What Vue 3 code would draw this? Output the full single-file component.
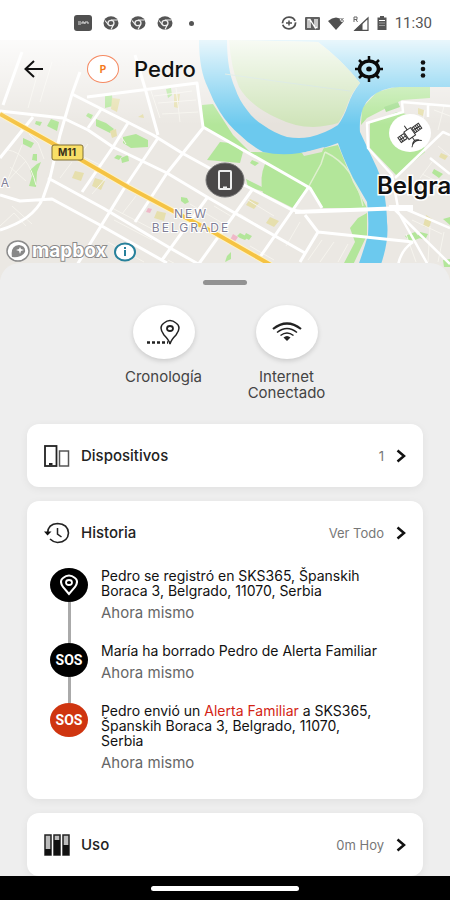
<template>
  <div class="phone">
    <header class="status-bar">
      <div class="status-left">
        <svg width="18" height="16" viewBox="0 0 18 16">
          <rect width="18" height="16" rx="3" fill="#505050" />
          <path d="M4 7h3M4 9h3M8 9V7h2v2M11 9V7h3v2" stroke="#ddd" fill="none" />
        </svg>
        <svg v-for="n in 3" :key="n" width="16" height="14" viewBox="0 0 16 14">
          <ellipse cx="8" cy="7" rx="7.5" ry="6.8" fill="#555" />
          <path d="M8 4h6.500M5.200 8.500 2 4.500M10.500 8.500 8 13.500" stroke="#eee" stroke-width="1.200" />
          <ellipse cx="8" cy="7" rx="3" ry="2.700" fill="#555" stroke="#eee" stroke-width="1.300" />
        </svg>
        <span class="status-dot"></span>
      </div>
      <div class="status-right">
        <svg width="16" height="14" viewBox="0 0 16 14" fill="none" stroke="#505050">
          <ellipse cx="8" cy="7" rx="6.500" ry="5.800" stroke-width="1.800" stroke-dasharray="17 1.500" />
          <path d="M8 4.500v5M5 7h6" stroke-width="1.500" />
        </svg>
        <svg width="15" height="13" viewBox="0 0 15 13">
          <rect width="15" height="13" rx="1" fill="#606060" />
          <path d="M3 11V2.500h2l5 8V2M12 2v8.500h-2M5 2.500V11" fill="none" stroke="#fff" stroke-width="1.300" />
        </svg>
        <svg width="17" height="13" viewBox="0 0 17 13">
          <path d="M0 4Q8-3 16 4L8 13z" fill="#505050" />
          <path d="m12.500 1 3 3m0-3-3 3" stroke="#fff" stroke-width="2.500" />
          <path d="m12.500 1 3 3m0-3-3 3" stroke="#666" />
        </svg>
        <svg width="16" height="15" viewBox="0 0 16 15">
          <path d="M2 14.300 15 2v12.300z" fill="none" stroke="#505050" stroke-width="1.200" />
          <path d="M2 14.300 9.500 7v7.300z" fill="#505050" />
          <path d="M1 6V1h3v2.500H1m2 0L4.500 6" fill="none" stroke="#666" />
        </svg>
        <svg width="10" height="14" viewBox="0 0 10 14">
          <path d="M3 0h4v1.500h2.500V14h-9V1.500H3z" fill="#555" />
          <path d="M2 4.500h6" stroke="#fff" />
          <path d="M2 7h6M2 9.500h6" stroke="#999" />
        </svg>
        <time>11:30</time>
      </div>
    </header>

    <section class="map">
      <svg class="map-canvas" viewBox="0 40 450 240" preserveAspectRatio="xMidYMin slice">
        <defs>
          <linearGradient id="fade" x1="0" y1="0" x2="0" y2="1">
            <stop offset="0" stop-color="#fff" stop-opacity=".85" />
            <stop offset="1" stop-color="#fff" stop-opacity="0" />
          </linearGradient>
        </defs>
        <rect y="40" width="450" height="240" fill="#ebe8e3" />

        <!-- parks -->
        <g fill="#b3e69a">
          <path d="m202 105 11-1 20 31 17 17 53 1 35-8 15 37 14 26h-45l-12-20-107-61z" />
          <path d="m220 142 10 1 13 9-3 11-33-3z" />
          <path d="m265 164 14 5 28 19-14 20-30-15q-4-15 2-29z" />
          <path d="m361 125 1-17 15-16 18-5h35v11l-28 2-35 18zM370 123l27-11 23 5 5 35-28 24-27-28z" />
          <path d="m358 218 9-5v22l-14 30h-10l12-23-5-14zM246 179l16 8 3 5-17-5zM252 160l7 3-4 3-5-3z" />
          <path d="m123 137 13-3 12 6v7l-17 1-8-5zM51 119l8 3-2 9-10-5zM36 121l6 1-2 4-5-2zM105 96l7-1 1 11-8 2zM96 119l10 4 8 6-4 4-14-7zM88 113l5 2-2 4-5-3zM166 89l5-1 1 7-4 3zM174 98h4v7h-3z" />
          <path d="m23 138 11 5-3 5-8-4zM33 154h4v7l-5-1zM30 170l7-6 4-2-4 10-1 15-7-1 3-10zM121 158l7-3 1 6-7 2zM117 155l5 1-3 4-5-2zM181 197l6 1 2 4-4 2-4-3zM227 256l4-4v7l-6 3zM237 236l3-3 8 4-3 3-5-2zM246 233l6 3-3 4-5-3z" />
          <path d="m405 236 10-4 5 6-10 4zM420 232l8 2-3 6-8-3zM434 169l9 5-4 4-7-5zM443 219l7-2v8zM443 260l7-1v8h-6z" />
        </g>
        <path d="m384 107 14-5 2 5-14 5z" fill="#a0dc8c" />
        <g fill="#e6dfad">
          <path d="m112 98 8 1-3 13-6-3zM174 94h6l-2 14-4-1zM75 171l9 2-3 8-9-3zM95 178l10 3-4 9-9-4zM157 211l9 2-2 8-10-3zM250 199l9 4-5 6-8-4zM270 217l9 4-5 6-8-4zM426 215l6 4-3 9-6-2zM441 153l7 3-3 4-6-3zM138 117l5-3 1 4zM418 108l6 2-1 6-5-2zM110 131l6-2 1 7-5 2z" />
        </g>
        <path d="m148 208 4 1-2 4-4-1zM233 234l5 3-4 6-4-3z" fill="#efb8c8" />

        <!-- minor streets -->
        <g fill="none" stroke="#f6f4ee" stroke-width="1">
          <path d="M8 150q20 3 28 35m-26-18 16 14m-20 2 20-22m-4-16-14 34M29 134l9 9 6 16M0 226l14-13 12 13m-14-20 20 18M38 72 28 108m24-46-12 40M150 88l10 30m-6-22 38-5m-34 12 38-3m-34 14 36-2M176 88l4 34M120 135l6 9m16-14-16-10M70 150l32 16m-24-8 10-14m38 42 30 16M60 178l12-16m20 32 14-16m16 36 14-18M112 208l42 22m-40-10 38 20m-44 2 36 20m40-46 32 18m-26-30 34 20m-56 36 34 18M214 206l20 12m14-18 26 16m-34-2 28 18m-18 14 24 14M300 222l-14 24m36-6-14 20m26-18-14 20m28-18-10 18M425 110l-3 16m22-20-6 24m-4-20 16 6m-12 30 12 10m-34 24 26 10m-20-16 24 12M432 162l-12 16m-8 42 30 14m-36 0 10 28m14-36-2 36m16-30-6 30" />
        </g>
        <path d="m325 152-4 12-12 22M325 152q30 14 38 54" fill="none" stroke="#dff0cf" stroke-width="1.500" />

        <!-- rivers -->
        <path d="M199 40q0 30 9 48 5 13 12 24 8 13 20 23 10 10 23 17 18 4 37 1 20-3 38-10 5 15 15 35l14 24q2 16 1 33-5 18-15 45h22q15-35 12-58 0-10-2-24-2-16-8-30-9-19-17-36-1-13 3-24 6-13 20-18 8-3 17-3h50V40z" fill="#6cc9ee" />
        <path d="M227 40q0 30 8 48 4 12 12 22 6 9 16 15 11 8 24 12 12 2 23 0 16-4 28-12 6-8 10-20 4-12 12-22-18-23-42-41z" fill="#e6e2dc" />
        <path d="M229 40q2 28 10 47 10 18 38 31 18 9 36 9 15-1 25-4 6-8 10-20 4-11 12-20-18-23-42-41z" fill="#cfe4b9" />
        <path d="M225 74q63 9 125 17" stroke="#c5ddd2" fill="none" />
        <path d="m302 153 22-6-2 5-18 4z" fill="#e6e2dc" />

        <!-- streets -->
        <g fill="none" stroke="#fff" stroke-width="3" stroke-linejoin="round">
          <path d="m0 111 63 7 25 12 25 17 54 26 40 24 40 23 58 33M72 94l81 41 29 18 31 17 37 18 42 22 13 2M87 97l110-14 6 44 107 61 12 20M135 55l10 33 13 47M80 72l-8 22-12 41-10 43-7 20q-10 22-43 32M0 195l20 6 32-2 48 26 67 38M48 178l55 30 67 40 30 17M203 128l-36 45-32 49M158 138l-33 49-48 78M128 123l-15 24-31 45M102 108l-14 20M33 117 0 158M22 52 3 105M207 198l-45 62M252 190l-54 75M308 188l-50 72M305 215l13 17 95 10M318 232l-18 30" />
          <path d="M450 106l-48-4 1 10-36 11 1 25 24 27 6 33M395 178l48-46 7 3M393 208l57 56M396 208l32 57M403 208l47 20M413 242q-12 8-15 23M430 158l20 16M428 105v12" stroke-width="2.500" />
        </g>
        <path d="M295 212l110-4" stroke="#fff" stroke-width="4" />
        <path d="M389 208h24" stroke="#fff" stroke-width="6" />

        <!-- M11 motorway -->
        <path d="m0 114 52 29 76 44 47 25 38 20 58 33" fill="none" stroke="#fff3c4" stroke-width="6" />
        <path d="m0 114 52 29 76 44 47 25 38 20 58 33" fill="none" stroke="#f5c344" stroke-width="4" />
        <rect x="52" y="145" width="31" height="15" rx="2" fill="#f8df67" stroke="#806e35" />
        <text class="map-road" x="67" y="156">M11</text>

        <text class="map-area" x="191" y="218">NEW</text>
        <text class="map-area" x="191" y="232">BELGRADE</text>
        <text class="map-area" x="6" y="187">A</text>
        <text class="map-city" x="377" y="194">Belgra</text>

        <!-- mapbox logo -->
        <g fill="none" stroke="#8b8b8b">
          <ellipse cx="18" cy="251" rx="11" ry="10" fill="#fff" stroke-width="1.500" />
          <path d="M12 257q-2-11 7-12 7 1 6 7-3 6-13 5" fill="#888" stroke="none" />
          <path d="m20 247 1 2 3 1-3 1-1 3-1-3-3-1 3-1z" fill="#fff" stroke="none" />
        </g>
        <text class="map-logo" x="32" y="257">mapbox</text>
        <ellipse cx="125" cy="252" rx="10" ry="8.500" fill="#fff" stroke="#27819b" stroke-width="2" />
        <path d="M125 250v6m0-9v2" stroke="#27819b" stroke-width="2" />

        <!-- satellite toggle -->
        <ellipse cx="410" cy="133" rx="21" ry="19" fill="#fff" />
        <g transform="rotate(-35 410 134)" fill="none" stroke="#333">
          <rect x="406" y="129" width="8" height="9" fill="#fff" />
          <path d="M398 130h7v6h-7zm17 0h8v6h-8zM400 130v6m2-6v6m15-6v6m2-6v6m2-6v6M398 133h7m10 0h8M410 129v-5m0 14v4m-4 2q4-4 8 0m-10 2q6-6 12 0" />
        </g>

        <!-- device marker -->
        <ellipse cx="225" cy="180" rx="19" ry="17" fill="#4b4949" stroke="#777" />
        <rect x="219" y="171" width="12" height="18" rx="1" fill="none" stroke="#eee" stroke-width="2" />
        <path d="M223 187.500h4" stroke="#eee" stroke-width="2" />
        <rect y="40" width="450" height="85" fill="url(#fade)" />
      </svg>

      <div class="toolbar">
        <button class="icon-button" aria-label="Volver">
          <svg width="20" height="18" viewBox="0 0 20 18" fill="none" stroke="#111" stroke-width="2">
            <path d="M19 9H2m8-8L1.500 9l8.500 8" />
          </svg>
        </button>
        <span class="avatar">P</span>
        <h1>Pedro</h1>
        <button class="icon-button" aria-label="Ajustes">
          <svg width="30" height="26" viewBox="0 0 30 26" fill="none" stroke="#0b0b0b">
            <path d="M15 0v5m0 16v5M1 13h5m18 0h5M5 4l4 4m12 10 4 4M5 22l4-4M21 8l4-4" stroke-width="2.500" />
            <ellipse cx="15" cy="13" rx="9.500" ry="8" stroke-width="3.500" />
            <ellipse cx="15" cy="13" rx="2.800" ry="2.500" fill="#0b0b0b" stroke="none" />
          </svg>
        </button>
        <button class="icon-button more" aria-label="Más opciones">
          <svg width="6" height="18" viewBox="0 0 6 18" fill="#111">
            <circle cx="3" cy="2.500" r="2.300" />
            <circle cx="3" cy="9" r="2.300" />
            <circle cx="3" cy="15.500" r="2.300" />
          </svg>
        </button>
      </div>
    </section>

    <main class="sheet">
      <div class="handle"></div>

      <div class="actions">
        <button class="action">
          <span class="action-circle">
            <svg width="36" height="28" viewBox="0 0 36 28" fill="none" stroke="#222">
              <path d="M24 26q-1-4-6-9-6-8 0-12 6-5 12 0 6 4 0 12-5 5-6 9z" stroke-width="1.500" />
              <ellipse cx="24" cy="10.500" rx="3" ry="2.500" stroke-width="1.800" />
              <path d="M1 24.500h21" stroke-width="2.500" stroke-dasharray="3 2" />
            </svg>
          </span>
          <span>Cronología</span>
        </button>
        <button class="action">
          <span class="action-circle">
            <svg width="30" height="20" viewBox="0 0 30 20" fill="none" stroke="#222">
              <path d="M1 7Q15-4 29 7" stroke-width="2.200" />
              <path d="M5 10.500q10-8 20 0M8.500 13.500q6.500-5 13 0" stroke-width="1.500" />
              <path d="M11.500 15.500q3.500-3 7 0L15 19z" fill="#222" stroke="none" />
            </svg>
          </span>
          <span>Internet<br />Conectado</span>
        </button>
      </div>

      <section class="card">
        <button class="card-row">
          <svg width="26" height="22" viewBox="0 0 26 22" fill="none" stroke="#222">
            <rect x="1" y="1" width="11.500" height="20" stroke-width="1.800" />
            <path d="M5 19h3.500" stroke-width="2" />
            <rect x="15.500" y="6" width="9" height="15" stroke="#555" stroke-width="1.500" />
          </svg>
          <span class="row-title">Dispositivos</span>
          <span class="row-value">1</span>
          <svg class="chevron" viewBox="0 0 10 14"><path d="m1.500 1.500 6.500 5.500-6.500 5.500" /></svg>
        </button>
      </section>

      <section class="card">
        <button class="card-row">
          <svg width="26" height="22" viewBox="0 0 26 22" fill="none" stroke="#222">
            <path d="M3.500 11Q4 2 13.500 1.500 24 2 24.500 11 24 20 13.500 20.500 9 20 6 17" stroke-width="1.600" />
            <path d="m0 9.500 3.500 4 4-4z" fill="#111" stroke="none" />
            <path d="M13.500 6v6l4 3" stroke-width="1.500" />
          </svg>
          <span class="row-title">Historia</span>
          <span class="row-value">Ver Todo</span>
          <svg class="chevron" viewBox="0 0 10 14"><path d="m1.500 1.500 6.500 5.500-6.500 5.500" /></svg>
        </button>

        <ul class="timeline">
          <li v-for="(event, index) in events" :key="index" class="event">
            <div class="event-rail">
              <span :class="['event-badge', event.type]">
                <svg v-if="event.type === 'place'" width="18" height="22" viewBox="0 0 18 22" fill="none" stroke="#fff">
                  <path d="M9 20 3 13Q-1 7 3 4q6-5 12 0 4 3 0 9z" stroke-width="2" />
                  <ellipse cx="9" cy="8.500" rx="3" ry="2.500" stroke-width="1.800" />
                </svg>
                <template v-else>SOS</template>
              </span>
            </div>
            <div class="event-body">
              <p>
                <template v-for="(part, i) in event.text" :key="i">
                  <em v-if="part.alert">{{ part.alert }}</em>
                  <template v-else>{{ part }}</template>
                </template>
              </p>
              <small>Ahora mismo</small>
            </div>
          </li>
        </ul>
      </section>

      <section class="card">
        <button class="card-row">
          <svg width="26" height="22" viewBox="0 0 26 22">
            <path d="M1 1h6v20H1zM10 1h6v20h-6zM19 1h6v20h-6z" fill="#bbb" stroke="#222" stroke-width="1.500" />
            <path d="M1 15h6v6H1zM10 6h6v15h-6zM19 11h6v10h-6z" fill="#111" />
          </svg>
          <span class="row-title">Uso</span>
          <span class="row-value">0m Hoy</span>
          <svg class="chevron" viewBox="0 0 10 14"><path d="m1.500 1.500 6.500 5.500-6.500 5.500" /></svg>
        </button>
      </section>
    </main>

    <footer class="nav-bar"><span></span></footer>
  </div>
</template>

<script setup>
const events = [
  {
    type: 'place',
    text: ['Pedro se registró en SKS365, Španskih Boraca 3, Belgrado, 11070, Serbia'],
  },
  {
    type: 'sos',
    text: ['María ha borrado Pedro de Alerta Familiar'],
  },
  {
    type: 'alert',
    text: ['Pedro envió un ', { alert: 'Alerta Familiar' }, ' a SKS365, Španskih Boraca 3, Belgrado, 11070, Serbia'],
  },
]
</script>

<style>
body {
  margin: 0;
  background: #eee;
}
</style>

<style scoped>
.phone {
  min-height: 100vh;
  display: flex;
  flex-direction: column;
  font-family: Inter, Roboto, sans-serif;
  color: #222;
}
button {
  border: 0;
  padding: 0;
  background: none;
  font: inherit;
  color: inherit;
  cursor: pointer;
}
.status-bar {
  height: 40px;
  padding: 6px 18px 0 74px;
  box-sizing: border-box;
  display: flex;
  align-items: center;
  justify-content: space-between;
  background: #fff;
}
.status-left,
.status-right {
  display: flex;
  align-items: center;
  gap: 11px;
}
.status-right {
  gap: 8px;
}
.status-dot {
  width: 5px;
  height: 5px;
  margin-left: 5px;
  border-radius: 50%;
  background: #555;
}
.status-bar time {
  font-family: Roboto, sans-serif;
  font-size: 15px;
  color: #555;
}
.map {
  position: relative;
  height: 240px;
}
.map-canvas {
  display: block;
  width: 100%;
  height: 100%;
}
.map-road {
  font-size: 10px;
  font-weight: 700;
  text-anchor: middle;
  fill: #3a321a;
}
.map-area {
  font-size: 12px;
  letter-spacing: 2px;
  text-anchor: middle;
  fill: #7f7e96;
  stroke: #fff;
  stroke-width: 2px;
  paint-order: stroke;
}
.map-city {
  font-size: 24px;
  font-weight: 600;
  fill: #111;
  stroke: #fff;
  stroke-width: 3px;
  paint-order: stroke;
}
.map-logo {
  font-size: 19px;
  font-weight: 700;
  fill: #fff;
  stroke: #8b8b8b;
  stroke-width: 2px;
  paint-order: stroke;
}
.toolbar {
  position: absolute;
  top: 0;
  left: 0;
  right: 0;
  height: 58px;
  padding: 0 24px;
  display: flex;
  align-items: center;
}
.icon-button {
  display: flex;
}
.icon-button.more {
  margin-left: 36px;
}
.avatar {
  width: 30px;
  height: 26px;
  margin-left: 43px;
  border: 1px solid #f58a62;
  border-radius: 50%;
  display: flex;
  align-items: center;
  justify-content: center;
  background: #fff;
  font-size: 10px;
  font-weight: 700;
  color: #f47a20;
}
h1 {
  flex: 1;
  margin: 0 0 0 15px;
  font-size: 22px;
  font-weight: 500;
  color: #111;
}
.sheet {
  position: relative;
  flex: 1;
  margin-top: -17px;
  padding: 17px 27px 0;
  border-radius: 20px 20px 0 0;
  background: #eee;
}
.handle {
  width: 44px;
  height: 5px;
  margin: 0 auto 20px;
  border-radius: 3px;
  background: #929292;
}
.actions {
  display: flex;
  justify-content: center;
  height: 119px;
}
.action {
  width: 123px;
  display: flex;
  flex-direction: column;
  align-items: center;
  gap: 10px;
  font-size: 15px;
  line-height: 16px;
  color: #444;
}
.action-circle {
  width: 62px;
  height: 54px;
  display: flex;
  align-items: center;
  justify-content: center;
  border-radius: 50%;
  background: #fff;
  box-shadow: 0 2px 5px rgba(0, 0, 0, 0.15);
}
.card {
  margin-bottom: 14px;
  border-radius: 12px;
  background: #fff;
  box-shadow: 0 2px 8px rgba(0, 0, 0, 0.06);
}
.card:last-child {
  margin-bottom: 0;
}
.card-row {
  width: 100%;
  height: 63px;
  padding: 0 17px;
  display: flex;
  align-items: center;
  text-align: left;
}
.row-title {
  flex: 1;
  margin-left: 11px;
  font-size: 15px;
  font-weight: 500;
}
.row-value {
  margin-right: 12px;
  font-size: 13px;
  color: #777;
}
.chevron {
  width: 10px;
  height: 14px;
  fill: none;
  stroke: #111;
  stroke-width: 2.5;
}
.timeline {
  margin: 0;
  padding: 4px 44px 28px 23px;
  list-style: none;
}
.event {
  display: flex;
  gap: 13px;
}
.event-rail {
  display: flex;
  flex-direction: column;
  align-items: center;
}
.event:not(:last-child) .event-rail::after {
  content: '';
  flex: 1;
  width: 3px;
  background: #aaa;
}
.event-badge {
  width: 38px;
  height: 34px;
  display: flex;
  align-items: center;
  justify-content: center;
  border-radius: 50%;
  background: #000;
  font-family: Roboto, sans-serif;
  font-size: 14px;
  font-weight: 700;
  color: #fff;
}
.event-badge.alert {
  background: #cf3510;
}
.event-body {
  flex: 1;
  padding-bottom: 22px;
}
.event:last-child .event-body {
  padding-bottom: 0;
}
.event p {
  margin: 0 0 7px;
  font-size: 14px;
  line-height: 15px;
  color: #111;
}
.event em {
  font-style: normal;
  color: #d32415;
}
.event small {
  display: block;
  font-size: 15px;
  line-height: 16px;
  color: #666;
}
.nav-bar {
  position: sticky;
  bottom: 0;
  height: 24px;
  display: flex;
  align-items: center;
  justify-content: center;
  background: #000;
}
.nav-bar span {
  width: 33%;
  height: 5px;
  border-radius: 3px;
  background: #fff;
}
</style>
